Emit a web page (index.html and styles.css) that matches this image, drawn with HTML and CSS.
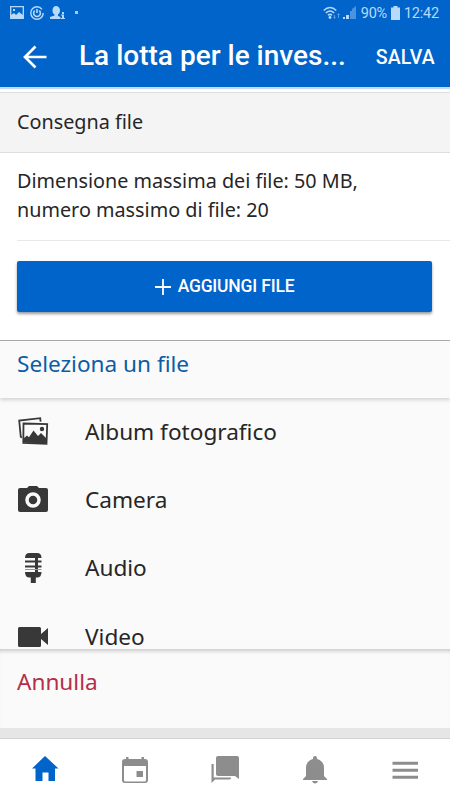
FILE: index.html
```html
<!DOCTYPE html>
<html lang="it">
<head>
    <meta charset="UTF-8">
    <meta name="viewport" content="width=device-width, initial-scale=1.0">
    <title>Consegna file</title>
    <link rel="stylesheet" href="styles.css">
</head>
<body>
    <header>
        <div class="status-bar">
            <div class="status-left">
                <svg width="14" height="13" viewBox="0 0 14 13"><path fill="none" stroke="currentColor" stroke-width="1.3" d="M.7.7h12.6v11.6H.7z"/><path fill="currentColor" d="M1 12V9l3-2 2 2 3-3 4 3v3zM3 3h2v2H3z"/></svg>
                <svg width="14" height="14" viewBox="0 0 14 14"><g fill="none" stroke="currentColor"><circle cx="7" cy="7" r="6.2" stroke-width="1.4" stroke-dasharray="34 5"/><path stroke-width="1.6" d="M4.700 4.600a3.400 3.400 0 1 0 4.600 0M7 3v4"/></g></svg>
                <svg width="15" height="14" viewBox="0 0 15 14"><path fill="currentColor" d="M2.500 4.500C2.500 1.500 4 0 6 0s4 1.500 4 4.500c0 2-1 3-2 4V10l2.500 1v2H0v-2l4.500-1.500v-1C3 7.500 2.500 6.500 2.500 4.500zM12 6h2v2h-2zM11 8.500h3V12h1v1h-4v-1h1V9.500h-1z"/></svg>
                <i class="dot"></i>
            </div>
            <div class="status-right">
                <svg width="18" height="14" viewBox="0 0 18 14"><g fill="none" stroke="currentColor" stroke-width="1.5"><path d="M.7 4.500Q7 -1.500 13.300 4.500M2.800 7Q7 3 11.200 7M4.900 9.300Q7 7.500 9.100 9.300"/></g><circle cx="7" cy="11.500" r="1.400" fill="currentColor"/><path opacity=".5" fill="currentColor" d="M11 9h1v2h1l-1.500 2-1.500-2h1zM15 12V9h-1l1.500-2L17 9h-1v3z"/></svg>
                <svg width="14" height="13" viewBox="0 0 14 13"><path fill="currentColor" d="M0 11h2v2H0zM3 9h3v4H3z"/><path fill="currentColor" opacity=".4" d="M7 5h2.500v8H7zM9 3l4-3v13H9z"/></svg>
                <span class="percent">90%</span>
                <svg width="9" height="14" viewBox="0 0 9 14"><path fill="currentColor" d="M2.500 0h4v1.500H9V14H0V1.500h2.500z"/></svg>
                <span class="clock">12:42</span>
            </div>
        </div>
        <div class="toolbar">
            <svg class="back" width="24" height="24" viewBox="0 0 24 24"><path fill="none" stroke="#fff" stroke-width="2.700" d="M23.500 12H2M12.500 1.500 2 12l10.500 10.500"/></svg>
            <h1>La lotta per le inves...</h1>
            <span class="save">SALVA</span>
        </div>
    </header>

    <main>
        <h2>Consegna file</h2>
        <p class="limits">Dimensione massima dei file: 50 MB,<br>numero massimo di file: 20</p>
        <div class="add">
            <button>
                <svg width="16" height="16" viewBox="0 0 16 16"><path fill="none" stroke="#fff" stroke-width="1.800" d="M8 0v16M0 8h16"/></svg>
                <span>AGGIUNGI FILE</span>
            </button>
        </div>
    </main>

    <section class="sheet">
        <div class="sheet-title">Seleziona un file</div>
        <ul>
            <li>
                <svg width="32" height="30" viewBox="0 0 32 30"><g fill="none" stroke="#383838" stroke-width="1.800"><path d="M5 21.500 3.800 21 2.200 4.500l21-2.300.4 3.500"/><path d="M6.500 7.500 30.200 8.200 29.500 27.700 6.300 27z"/></g><path fill="#383838" d="m6.500 22.500 3.500-3 2 1.700 4.500-6.700 4.500 5.500 3-3 5.500 5.500-.3 5L6 26.500z"/><circle cx="25" cy="13" r="2.200" fill="#383838"/></svg>
                <span>Album fotografico</span>
            </li>
            <li>
                <svg width="32" height="30" viewBox="0 0 32 30"><path fill="#383838" d="M3 4h7l2-2h8l2 2h7q2 0 2 2v20q0 2-2 2H3q-2 0-2-2V6q0-2 2-2z"/><circle cx="16" cy="16" r="6" fill="none" stroke="#fafafa" stroke-width="3.500"/></svg>
                <span>Camera</span>
            </li>
            <li>
                <svg width="32" height="30" viewBox="0 0 32 30"><path fill="#383838" d="M8 5Q8 0 12.500 0H20q4.500 0 4.500 5zM18 4h3v17h-3zM8 7.500h16.500v2H8zM8 12.500h16.500v2H8zM8 19h16.500q0 5.500-4.500 5.500h-1.200V30h-5v-5.500h-1.300Q8 24.500 8 19zM8 17h16.500v-.500H8z"/></svg>
                <span>Audio</span>
            </li>
            <li>
                <svg width="32" height="30" viewBox="0 0 32 30"><path fill="#383838" d="M2.500 6h20q1.500 0 1.500 1.500V13l7-6v17l-7-6v6.500q0 1.500-1.500 1.500h-20Q1 26 1 24.500v-17Q1 6 2.500 6z"/></svg>
                <span>Video</span>
            </li>
        </ul>
        <div class="cancel">Annulla</div>
    </section>

    <nav>
        <a class="active"><svg width="28" height="28" viewBox="0 0 28 28"><path fill="currentColor" d="M14 0 27.500 12.500H24V25h-6.500v-8.500h-6V25H4.500V12.500H1z"/></svg></a>
        <a><svg width="28" height="28" viewBox="0 0 28 28"><path fill="currentColor" fill-rule="evenodd" d="M5 3V1h2.500v2h13V1H23v2h1q3 0 3 3v18q0 3-3 3H4q-3 0-3-3V6q0-3 3-3zM3 10v14q0 1.500 1.500 1.500h19q1.500 0 1.500-1.500V10zM15.500 15H22v6h-6.500z"/></svg></a>
        <a><svg width="28" height="28" viewBox="0 0 28 28"><path fill="currentColor" d="M7 0h19q2 0 2 2v21l-4-3H7q-2 0-2-2V2q0-2 2-2zM.500 8h2.200v13.500H20V22q0 1.500-2 1.500H4L.500 27z"/></svg></a>
        <a><svg width="28" height="28" viewBox="0 0 28 28"><path fill="currentColor" d="M12 2q0-2 2-2t2 2v1q7 2 7 9v8l3 3v1H2v-1l3-3v-8q0-7 7-9zM11 25h6q-1 2.500-3 2.500T11 25z"/></svg></a>
        <a><svg width="28" height="28" viewBox="0 0 28 28"><path fill="currentColor" d="M1.500 5.700H27v3H1.500zM1.500 12.700H27v3H1.500zM1.500 19.700H27v3H1.500z"/></svg></a>
    </nav>
</body>
</html>
```
FILE: styles.css
```css
* {
    box-sizing: border-box;
}
body {
    margin: 0;
    height: 800px;
    overflow: hidden;
    display: flex;
    flex-direction: column;
    background-color: #fff;
    color: #262626;
    font-family: "Noto Sans", sans-serif;
}
svg {
    display: block;
    flex: none;
}
header {
    height: 87px;
    background-color: #0064cb;
    color: #fff;
    font-family: Roboto, sans-serif;
    box-shadow: 0 2px 1px #c4daf0;
}
.status-bar {
    display: flex;
    justify-content: space-between;
    height: 26px;
    padding: 0 11px 1px 10px;
    color: #b8dafa;
    font-size: 14.5px;
}
.status-left,
.status-right {
    display: flex;
    align-items: center;
}
.status-left {
    gap: 6px;
}
.dot {
    width: 3px;
    height: 3px;
    margin-left: 4px;
    background-color: #a5cef5;
}
.status-right svg {
    margin-right: 2px;
}
.percent {
    margin: 1px 4px 0 2px;
    letter-spacing: -0.3px;
}
.clock {
    margin: 1px 0 0 2px;
    letter-spacing: -0.2px;
}
.toolbar {
    display: flex;
    align-items: center;
    height: 61px;
    padding: 0 15px 0 23px;
}
h1 {
    flex: 1;
    margin: 0 0 3px 32px;
    font-size: 28px;
    font-weight: 500;
    white-space: nowrap;
}
.save {
    margin-top: 2px;
    font-size: 19.5px;
    font-weight: 500;
    letter-spacing: 0.2px;
}
h2 {
    height: 61px;
    margin: 5px 0 0;
    padding: 0 17px;
    border-top: 1px solid #dedede;
    border-bottom: 1px solid #dedede;
    background-color: #f4f4f4;
    font-size: 19.8px;
    font-weight: 400;
    line-height: 58px;
}
.limits {
    height: 88px;
    margin: 0 0 0 17px;
    padding-top: 13px;
    border-bottom: 1px solid #e8e8e8;
    font-size: 19.8px;
    line-height: 29px;
    white-space: nowrap;
}
.add {
    height: 99px;
    padding: 20px 18px 0 17px;
}
button {
    display: flex;
    align-items: center;
    justify-content: center;
    gap: 7px;
    width: 100%;
    height: 51px;
    padding: 0;
    border: none;
    border-radius: 2px;
    background-color: #0064cb;
    color: #fff;
    font-family: Roboto, sans-serif;
    font-size: 17.5px;
    font-weight: 500;
    letter-spacing: -0.2px;
    box-shadow: 0 2px 3px rgba(0, 0, 0, 0.4);
}
button span {
    margin-bottom: 2px;
}
.sheet {
    height: 388px;
    border-top: 1px solid #a9a9a9;
    background-color: #fafafa;
}
.sheet-title {
    height: 57px;
    padding-left: 17px;
    color: #0c5da5;
    font-size: 22.6px;
    line-height: 45px;
    box-shadow: 0 2px 4px rgba(0, 0, 0, 0.16);
}
ul {
    height: 251px;
    margin: 0;
    padding: 0;
    overflow: hidden;
    list-style: none;
}
li {
    display: flex;
    align-items: center;
    gap: 36px;
    height: 68.3px;
    padding: 0 0 2px 17px;
    font-size: 22.6px;
}
.cancel {
    height: 79px;
    padding-left: 17px;
    color: #b52e49;
    font-size: 22.6px;
    line-height: 66px;
    box-shadow: inset 0 5px 4px -3px rgba(0, 0, 0, 0.2);
}
nav {
    display: flex;
    height: 72px;
    border-top: 10px solid #e6e6e6;
    box-shadow: inset 0 1px #d3d3d3;
    color: #8d8d8d;
}
nav a {
    flex: 1;
    display: flex;
    justify-content: center;
    padding-top: 18px;
}
nav .active {
    color: #0064cb;
}
```
